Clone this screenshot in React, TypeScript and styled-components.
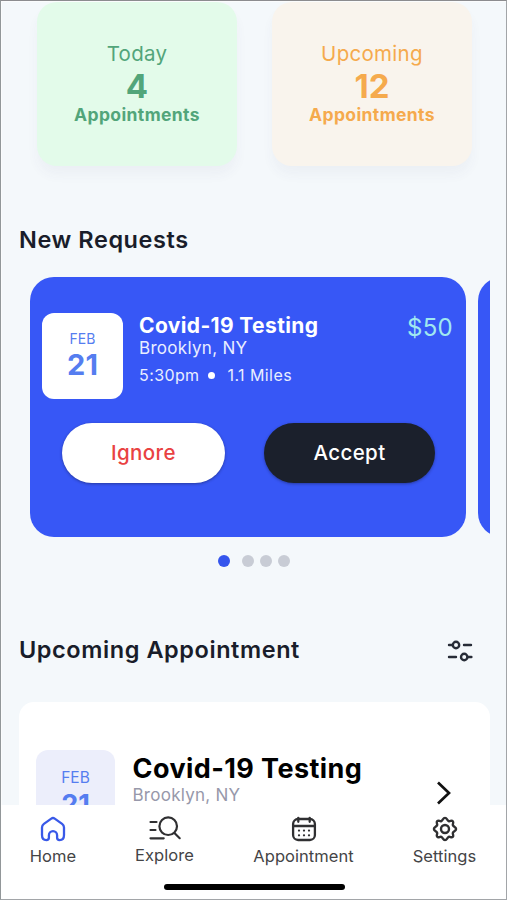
import React from "react";
import styled, { createGlobalStyle } from "styled-components";

const GlobalStyle = createGlobalStyle`
  * { box-sizing: border-box; }
  body { margin: 0; background: #fff; }
`;

const Phone = styled.div`
  width: 507px;
  height: 900px;
  display: flex;
  flex-direction: column;
  overflow: hidden;
  border: 1px solid #a2a5a8;
  border-left-color: #929799;
  border-top-color: #8c8c8f;
  background: #f4f8fb;
  font-family: Inter, "Liberation Sans", sans-serif;
  color: #191d2a;
`;

const Screen = styled.main`
  height: 804px;
  flex: none;
  overflow: hidden;
  border-left: 1px solid #fbfcfd;
  border-top: 1px solid #fbfcfd;
`;

const Text = styled.div<{ $size: number; $line: number; $weight?: number; $spacing?: number; $color?: string }>`
  font-size: ${(p) => p.$size}px;
  line-height: ${(p) => p.$line}px;
  font-weight: ${(p) => p.$weight ?? 400};
  letter-spacing: ${(p) => p.$spacing ?? 0}px;
  color: ${(p) => p.$color ?? "inherit"};
  white-space: nowrap;
`;

const Summary = styled.section`
  display: flex;
  gap: 35px;
  padding-left: 35px;
  height: 213px;
`;

const StatCard = styled.article<{ $bg: string; $fg: string }>`
  width: 200px;
  height: 164px;
  border-radius: 20px;
  padding-top: 39px;
  background: ${(p) => p.$bg};
  color: ${(p) => p.$fg};
  box-shadow: 0 9px 12px rgba(60, 80, 110, 0.045);
  display: flex;
  flex-direction: column;
  align-items: center;
`;

const SectionTitle = styled.h2`
  margin: 0;
  font-size: 23.5px;
  line-height: 28px;
  font-weight: 600;
  letter-spacing: 0.57px;
`;

const Requests = styled.section`
  height: 409px;
  padding: 11px 16px 0 17px;
`;

const Carousel = styled.div`
  display: flex;
  gap: 12px;
  width: 471px;
  height: 260px;
  margin-top: 23px;
  padding-left: 11px;
  overflow: hidden;
`;

const RequestCard = styled.article`
  flex: none;
  width: 436px;
  height: 260px;
  border-radius: 24px;
  padding: 36px 13px 0 12px;
  background: #3757f6;
  color: #fff;
`;

const RequestTop = styled.div`
  display: flex;
  height: 110px;
`;

const DateTile = styled.div<{ $soft?: boolean }>`
  flex: none;
  display: flex;
  flex-direction: column;
  align-items: center;
  width: ${(p) => (p.$soft ? 79 : 81)}px;
  height: 86px;
  padding-top: ${(p) => (p.$soft ? 18 : 17)}px;
  border-radius: 12px;
  background: ${(p) => (p.$soft ? "#eceefb" : "#fff")};
  color: #557df0;
`;

const RequestInfo = styled.div`
  flex: 1;
  padding-left: 16px;
`;

const Meta = styled.div`
  display: flex;
  align-items: center;
  margin-top: 4px;
`;

const Bullet = styled.span`
  width: 7px;
  height: 7px;
  margin: 0 13px 0 8px;
  border-radius: 50%;
  background: #fff;
`;

const Actions = styled.div`
  display: flex;
  gap: 39px;
  padding-left: 20px;
`;

const PillButton = styled.button<{ $dark?: boolean }>`
  flex: none;
  width: ${(p) => (p.$dark ? 171 : 163)}px;
  height: 60px;
  padding: 0;
  border: 0;
  border-radius: 30px;
  background: ${(p) => (p.$dark ? "#1b202c" : "#fff")};
  color: ${(p) => (p.$dark ? "#fff" : "#e94242")};
  box-shadow: 0 1px 3px rgba(20, 25, 60, 0.45);
  font: 500 20.5px/60px Inter, "Liberation Sans", sans-serif;
  letter-spacing: 0.4px;
`;

const Pager = styled.div`
  display: flex;
  gap: 6px;
  padding: 18px 0 0 199px;
`;

const Dot = styled.span<{ $active?: boolean }>`
  width: 12px;
  height: 12px;
  margin-right: ${(p) => (p.$active ? 5.5 : 0)}px;
  border-radius: 50%;
  background: ${(p) => (p.$active ? "#3555ed" : "#c8ccd5")};
`;

const TitleRow = styled.div`
  display: flex;
  justify-content: space-between;
  align-items: center;
  height: 52px;
  padding: 0 33.5px 0 17px;
`;

const AppointmentCard = styled.article`
  display: flex;
  width: 471px;
  height: 220px;
  margin: 26px 0 0 17px;
  padding: 48px 17px;
  border-radius: 15px;
  background: #fff;
`;

const AppointmentInfo = styled.div`
  flex: none;
  width: 320.5px;
  padding-left: 17.5px;
  padding-top: 3px;
`;

const ChevronBox = styled.div`
  padding-top: 30px;
`;

const NavBar = styled.nav`
  display: flex;
  height: 79px;
  flex: none;
  background: #fff;
`;

const NavItem = styled.div<{ $width: number; $raise?: boolean }>`
  display: flex;
  flex-direction: column;
  align-items: center;
  width: ${(p) => p.$width}px;
  padding-top: 10px;
  color: #444446;
  svg { display: block; margin-bottom: ${(p) => (p.$raise ? 2 : 3)}px; }
`;

const Bottom = styled.div`
  flex: 1;
  background: #fff;
  padding-left: 163px;
`;

const HomeIndicator = styled.div`
  width: 181px;
  height: 6px;
  border-radius: 3px;
  background: #000;
`;

const FilterIcon = () => (
  <svg width="26" height="24" viewBox="0 0 26 24" fill="none" stroke="#272c37" strokeWidth="2.4" strokeLinecap="round">
    <path d="M2 7h3M17 7h7M2 19h7M21 19h3.4" />
    <circle cx="9" cy="7" r="3.2" />
    <circle cx="17.2" cy="19" r="3.2" />
  </svg>
);

const HomeIcon = () => (
  <svg width="28" height="28" viewBox="0 0 28 28" fill="none" stroke="#3959e8" strokeWidth="2.3" strokeLinejoin="round">
    <path d="M12.3 3.6 4.9 8.9Q3 10.3 3 12.6V20Q3 25.1 7.4 25.1Q9.9 25.1 9.9 22.8V20.2a4.1 4.1 0 0 1 8.2 0V22.8Q18.1 25.1 20.6 25.1Q25 25.1 25 20V12.6Q25 10.3 23.1 8.9L15.7 3.6Q14 2.4 12.3 3.6Z" />
  </svg>
);

const ExploreIcon = () => (
  <svg width="34" height="28" viewBox="0 0 34 28" fill="none" stroke="#303032" strokeWidth="2.2" strokeLinecap="round">
    <path d="M2.5 7h6M2.5 15h5M2.5 23.3h13.2M26.7 18.3l5 4.9" />
    <circle cx="20.2" cy="11.2" r="8.8" />
  </svg>
);

const CalendarIcon = () => (
  <svg width="28" height="28" viewBox="0 0 28 28" fill="none" stroke="#303032" strokeWidth="2.3" strokeLinecap="round">
    <rect x="3.1" y="4" width="21.8" height="21" rx="5" />
    <path d="M3.2 11h21.6M8.3 2.8v4M19.7 2.8v4" />
    <path d="M9 15.6h.01M14 15.6h.01M19 15.6h.01M9 20.3h.01M14 20.3h.01M19 20.3h.01" />
  </svg>
);

const GearIcon = () => (
  <svg width="28" height="28" viewBox="0 0 28 28" fill="none" stroke="#303032" strokeWidth="2.4" strokeLinejoin="round">
    <path d="M14 2.9C16 2.9 16.2 5.5 17.7 6.1S20.5 4.8 21.8 6.2 21.3 8.9 21.9 10.3 25.1 12 25.1 14 22.5 16.2 21.9 17.7 23.2 20.5 21.8 21.8 19.1 21.3 17.7 21.9 16 25.1 14 25.1 11.8 22.5 10.3 21.9 7.5 23.2 6.2 21.8 6.7 19.1 6.1 17.7 2.9 16 2.9 14 5.5 11.8 6.1 10.3 4.8 7.5 6.2 6.2 8.9 6.7 10.3 6.1 12 2.9 14 2.9Z" />
    <circle cx="14" cy="14" r="4" />
  </svg>
);

const ChevronIcon = () => (
  <svg width="16" height="26" viewBox="0 0 16 26" fill="none" stroke="#111" strokeWidth="2.7">
    <path d="M2 2.5 13 13 2 23.5" />
  </svg>
);

const stats = [
  { label: "Today", count: "4", bg: "#e3fbea", fg: "#52a57a" },
  { label: "Upcoming", count: "12", bg: "#f9f4ed", fg: "#f5aa4d" },
];

const navItems = [
  { label: "Home", width: 104, Icon: HomeIcon },
  { label: "Explore", width: 119, raise: true, Icon: ExploreIcon },
  { label: "Appointment", width: 159, Icon: CalendarIcon },
  { label: "Settings", width: 123, Icon: GearIcon },
];

export default function App() {
  return (
    <>
      <GlobalStyle />
      <Phone>
        <Screen>
          <Summary>
            {stats.map((s) => (
              <StatCard key={s.label} $bg={s.bg} $fg={s.fg}>
                <Text $size={20.5} $line={26} $spacing={0.3}>{s.label}</Text>
                <Text $size={33} $line={38} $weight={700}>{s.count}</Text>
                <Text $size={17.5} $line={19} $weight={700} $spacing={0.38}>Appointments</Text>
              </StatCard>
            ))}
          </Summary>

          <Requests>
            <SectionTitle>New Requests</SectionTitle>
            <Carousel>
              <RequestCard>
                <RequestTop>
                  <DateTile>
                    <Text $size={14} $line={18}>FEB</Text>
                    <Text $size={29} $line={34} $weight={700}>21</Text>
                  </DateTile>
                  <RequestInfo>
                    <Text $size={21} $line={25} $weight={700} $spacing={0.37}>Covid-19 Testing</Text>
                    <Text $size={17} $line={21} $spacing={0.3} $color="#e9eeff">Brooklyn, NY</Text>
                    <Meta>
                      <Text $size={16} $line={24} $spacing={0.4} $color="#e9eeff">5:30pm</Text>
                      <Bullet />
                      <Text $size={16} $line={24} $spacing={0.42} $color="#e9eeff">1.1 Miles</Text>
                    </Meta>
                  </RequestInfo>
                  <Text $size={24} $line={29} $spacing={0.3} $color="#a0e8f0">$50</Text>
                </RequestTop>
                <Actions>
                  <PillButton>Ignore</PillButton>
                  <PillButton $dark>Accept</PillButton>
                </Actions>
              </RequestCard>
              <RequestCard />
            </Carousel>
            <Pager>
              <Dot $active />
              <Dot />
              <Dot />
              <Dot />
            </Pager>
          </Requests>

          <TitleRow>
            <SectionTitle>Upcoming Appointment</SectionTitle>
            <FilterIcon />
          </TitleRow>
          <AppointmentCard>
            <DateTile $soft>
              <Text $size={15.5} $line={20}>FEB</Text>
              <Text $size={27} $line={34} $weight={700}>21</Text>
            </DateTile>
            <AppointmentInfo>
              <Text $size={27} $line={32} $weight={700} $spacing={0.42} $color="#000">Covid-19 Testing</Text>
              <Text $size={17} $line={21} $spacing={0.25} $color="#9798aa">Brooklyn, NY</Text>
            </AppointmentInfo>
            <ChevronBox>
              <ChevronIcon />
            </ChevronBox>
          </AppointmentCard>
        </Screen>
        <NavBar>
          {navItems.map(({ label, width, raise, Icon }) => (
            <NavItem key={label} $width={width} $raise={raise}>
              <Icon />
              <Text $size={16.5} $line={20} $spacing={0.05}>{label}</Text>
            </NavItem>
          ))}
        </NavBar>
        <Bottom>
          <HomeIndicator />
        </Bottom>
      </Phone>
    </>
  );
}
